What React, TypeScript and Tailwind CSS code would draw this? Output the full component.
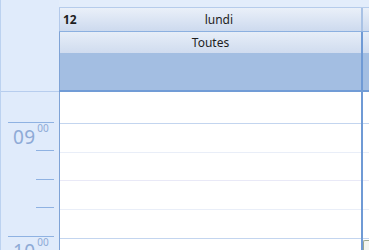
import React from "react";

const font = "font-['Noto_Sans',_'Open_Sans',_sans-serif]";

function Tick({ long }: { long?: boolean }) {
  return long ? (
    <div className="h-px shrink-0 ml-[7px] w-[46px] bg-[#8fb2e2]" />
  ) : (
    <div className="h-px shrink-0 ml-[35px] w-[18px] bg-[#8fb2e2]" />
  );
}

function HourLabel({ h }: { h: string }) {
  return (
    <div className="flex items-start pl-[12px] pt-[1px] text-[#8eaad6]">
      <span className="text-[19px] leading-[19px] mt-[4px] tracking-[0.3px]">{h}</span>
      <span className="text-[10px] leading-[10px] ml-[2px] -mt-[1px]">00</span>
    </div>
  );
}

export default function App() {
  return (
    <div className={`w-[369px] h-[250px] overflow-hidden flex bg-[#e3edfb] ${font}`}>
      {/* time column */}
      <div className="w-[59px] shrink-0 flex flex-col border-l border-[#bcd2f0] bg-[#e0ebfb] overflow-hidden">
        <div className="h-[91px] shrink-0" />
        <div className="h-px shrink-0 bg-[#b7cdee]" />
        <div className="h-[30px] shrink-0" />
        <Tick long />
        <div className="h-[27px] shrink-0">
          <HourLabel h="09" />
        </div>
        <Tick />
        <div className="h-[28px] shrink-0" />
        <Tick />
        <div className="h-[27px] shrink-0" />
        <Tick />
        <div className="h-[28px] shrink-0" />
        <Tick long />
        <div className="h-[27px] shrink-0">
          <HourLabel h="10" />
        </div>
      </div>

      {/* days */}
      <div className="flex-1 flex flex-col">
        <div className="h-[7px] shrink-0" />
        {/* date row */}
        <div className="h-[24px] shrink-0 flex border-t border-[#b6cceb] bg-gradient-to-b from-[#eaf0f9] to-[#cddaee]">
          <div className="w-[302px] shrink-0 flex items-center border-l border-[#b3c9ea] pl-[3px] text-[12px] text-[#1e1e1e]">
            <span className="font-bold leading-none">12</span>
            <span className="flex-1 text-center leading-none">lundi</span>
          </div>
          <div className="w-[2px] shrink-0 bg-[#a9c2e5]" />
          <div className="flex-1" />
        </div>
        <div className="h-px shrink-0 bg-[#8cb0e0]" />
        {/* resource row */}
        <div className="h-[21px] shrink-0 flex bg-gradient-to-b from-[#e7eef8] to-[#d0dcef]">
          <div className="w-[302px] shrink-0 flex items-center justify-center border-l border-[#7fa3d6] text-[12px] text-[#1e1e1e] leading-none">
            Toutes
          </div>
          <div className="w-[2px] shrink-0 bg-[#6f9ad5]" />
          <div className="flex-1" />
        </div>
        {/* all-day band */}
        <div className="h-[37px] shrink-0 flex bg-[#a3bee2]">
          <div className="w-[302px] shrink-0 border-l border-[#7fa3d6]" />
          <div className="w-[2px] shrink-0 bg-[#6f9ad5]" />
          <div className="flex-1" />
        </div>
        <div className="h-[2px] shrink-0 bg-[#719cd6]" />
        {/* grid */}
        <div className="flex-1 flex bg-white">
          <div className="w-[302px] shrink-0 flex flex-col border-l border-[#7fa3d6]">
            <div className="h-[32px] shrink-0 border-b border-[#c3d5ef]" />
            <div className="h-[29px] shrink-0 border-b border-[#e9eef8]" />
            <div className="h-[28px] shrink-0 border-b border-[#e9e9f7]" />
            <div className="h-[29px] shrink-0 border-b border-[#e9eef8]" />
            <div className="h-[29px] shrink-0 border-b border-[#c3d5ef]" />
            <div className="flex-1" />
          </div>
          <div className="w-[2px] shrink-0 bg-[#6f9ad5]" />
          <div className="flex-1 flex flex-col">
            <div className="h-[32px] shrink-0 border-b border-[#c3d5ef]" />
            <div className="h-[29px] shrink-0 border-b border-[#e9eef8]" />
            <div className="h-[28px] shrink-0 border-b border-[#e9e9f7]" />
            <div className="h-[29px] shrink-0 border-b border-[#e9eef8]" />
            <div className="h-[29px] shrink-0 border-b border-[#c3d5ef]" />
            <div className="flex-1 pt-[1px]">
              <div className="h-full border-l border-t border-[#9aa78f] rounded-tl-[2px] bg-[#f4f6f0]" />
            </div>
          </div>
        </div>
      </div>
    </div>
  );
}
